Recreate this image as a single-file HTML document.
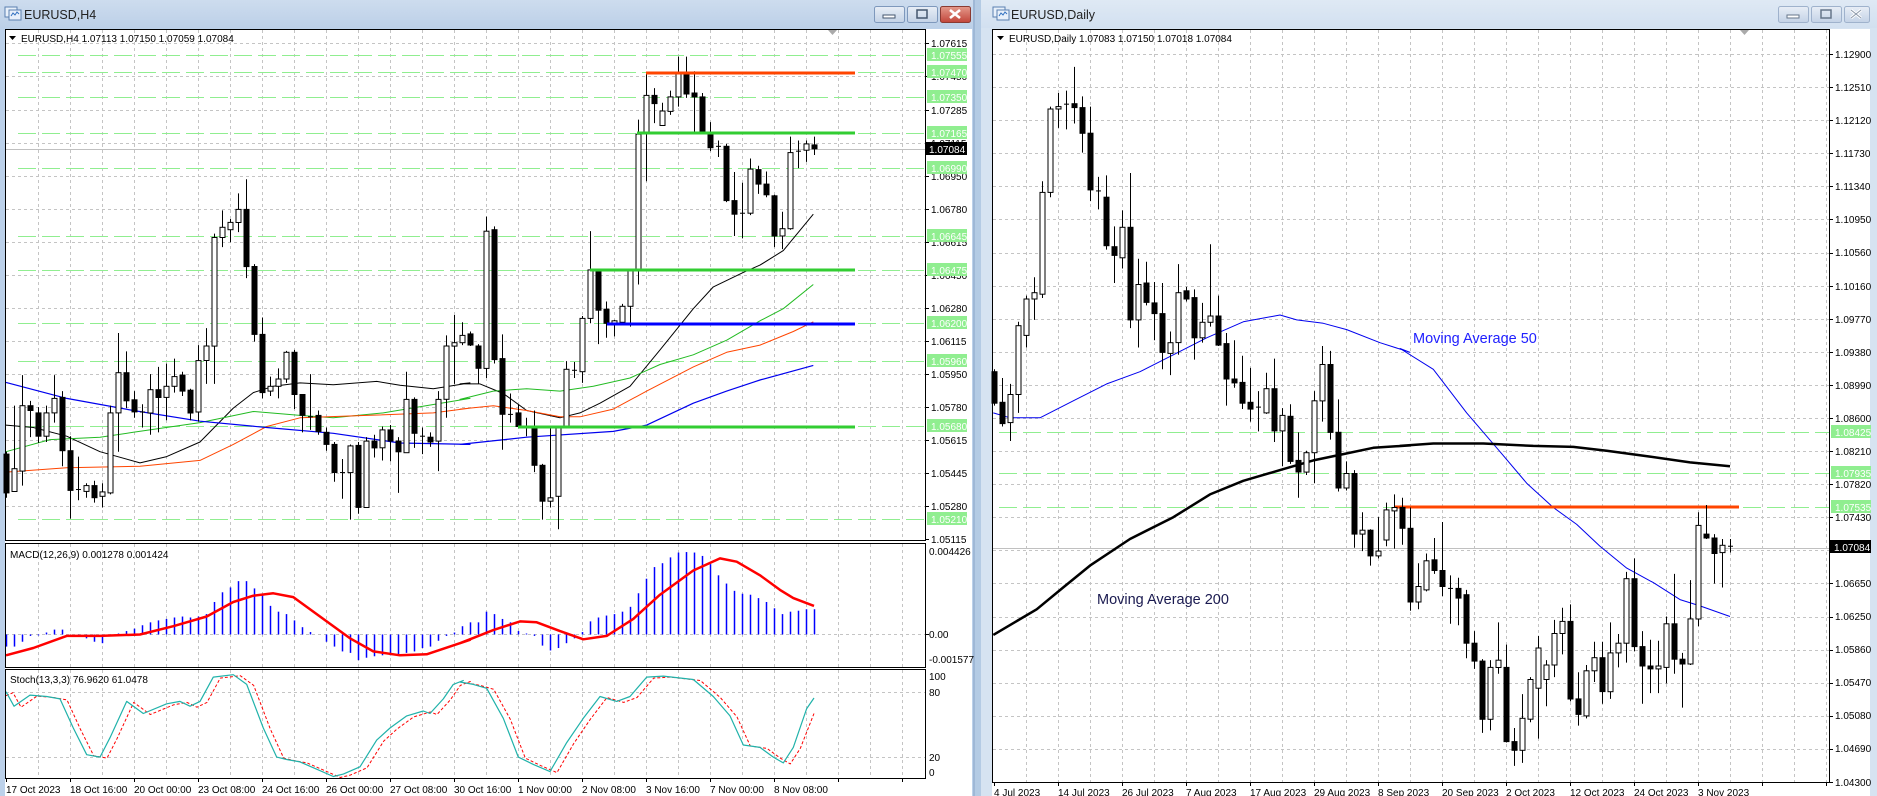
<!DOCTYPE html>
<html><head><meta charset="utf-8">
<style>
html,body{margin:0;padding:0;background:#fff;width:1877px;height:796px;overflow:hidden}
svg{display:block;font-family:"Liberation Sans",sans-serif}
.ax{font-size:10px;fill:#000}
.hl{font-size:10px;fill:#fff}
.tt{font-size:12.5px;fill:#222}
</style></head><body>
<svg id="s" width="1877" height="796" viewBox="0 0 1877 796" xmlns="http://www.w3.org/2000/svg">
<defs>
<linearGradient id="tb" x1="0" y1="0" x2="0" y2="1"><stop offset="0" stop-color="#cddcee"/><stop offset="1" stop-color="#bcd0e8"/></linearGradient>
<linearGradient id="tb2" x1="0" y1="0" x2="0" y2="1"><stop offset="0" stop-color="#dfe9f4"/><stop offset="1" stop-color="#d2e0f0"/></linearGradient>
<linearGradient id="bt" x1="0" y1="0" x2="0" y2="1"><stop offset="0" stop-color="#e8eef6"/><stop offset="1" stop-color="#c3d2e6"/></linearGradient>
<linearGradient id="br" x1="0" y1="0" x2="0" y2="1"><stop offset="0" stop-color="#e49a8c"/><stop offset="1" stop-color="#c2453a"/></linearGradient>
</defs>
<!-- windows frames -->
<rect x="0" y="0" width="975" height="796" fill="#bcd1ea"/>
<rect x="0" y="0" width="975" height="28" fill="url(#tb)"/>
<rect x="975" y="0" width="6" height="796" fill="#b4cbe4"/>
<rect x="973" y="0" width="2" height="796" fill="#9fb8d6"/>
<rect x="981" y="0" width="896" height="796" fill="#d6e3f1"/>
<rect x="981" y="0" width="896" height="28" fill="url(#tb2)"/>
<rect x="5" y="29" width="967" height="767" fill="#fff"/>
<rect x="992" y="29" width="878" height="767" fill="#fff"/>
<!-- title icons -->
<g stroke="#5a7fb0" fill="#e8f0fa" stroke-width="1">
<rect x="5" y="7" width="12" height="10"/><rect x="9" y="10" width="12" height="10"/>
<rect x="993" y="7" width="12" height="10"/><rect x="997" y="10" width="12" height="10"/>
</g>
<path d="M11 16 l2-3 2 2 2-3 2 2" stroke="#3070c0" fill="none"/>
<path d="M999 16 l2-3 2 2 2-3 2 2" stroke="#3070c0" fill="none"/>
<text x="24" y="19" class="tt">EURUSD,H4</text>
<text x="1011" y="19" class="tt">EURUSD,Daily</text>
<!-- buttons left -->
<rect x="874.5" y="6.5" width="30" height="16" rx="2" fill="url(#bt)" stroke="#7e98bc"/>
<rect x="883" y="15" width="12" height="3" fill="#fff" stroke="#44566e" stroke-width="1"/>
<rect x="907.5" y="6.5" width="30" height="16" rx="2" fill="url(#bt)" stroke="#7e98bc"/>
<rect x="917" y="10" width="10" height="8" fill="none" stroke="#44566e" stroke-width="1.5"/>
<rect x="940.5" y="6.5" width="30" height="16" rx="2" fill="url(#br)" stroke="#8a3a32"/>
<path d="M950 10 l10 8 M960 10 l-10 8" stroke="#fff" stroke-width="2.6"/>
<!-- buttons right -->
<rect x="1778.5" y="6.5" width="30" height="16" rx="2" fill="url(#bt)" stroke="#9fb2cc"/>
<rect x="1787" y="15" width="12" height="3" fill="#fff" stroke="#66768a"/>
<rect x="1811.5" y="6.5" width="30" height="16" rx="2" fill="url(#bt)" stroke="#9fb2cc"/>
<rect x="1821" y="10" width="10" height="8" fill="none" stroke="#66768a" stroke-width="1.5"/>
<rect x="1844.5" y="6.5" width="25" height="16" rx="2" fill="url(#bt)" stroke="#9fb2cc"/>
<path d="M1851 10 l10 8 M1861 10 l-10 8" stroke="#fff" stroke-width="3"/>
<path d="M1851 10 l10 8 M1861 10 l-10 8" stroke="#8a97a8" stroke-width="1"/>
<g id="g"></g>
<!-- panel borders -->
<g fill="none" stroke="#000" stroke-width="1">
<rect x="5.5" y="29.5" width="920" height="511"/>
<rect x="5.5" y="543.5" width="920" height="124"/>
<rect x="5.5" y="669.5" width="920" height="109"/>
<rect x="992.5" y="29.5" width="837" height="753"/>
</g>
<path d="M828 30 h9 l-4.5 5z M1740 30 h9 l-4.5 5z" fill="#aaa"/>
<!-- header texts -->
<path d="M9 36 h7 l-3.5 4z M997 36 h7 l-3.5 4z" fill="#000"/>
<text x="21" y="42" class="ax">EURUSD,H4  1.07113 1.07150 1.07059 1.07084</text>
<text x="1009" y="42" class="ax">EURUSD,Daily  1.07083 1.07150 1.07018 1.07084</text>
<text x="10" y="558" class="ax">MACD(12,26,9) 0.001278 0.001424</text>
<text x="10" y="683" class="ax">Stoch(13,3,3) 76.9620 61.0478</text>
<text x="1097" y="604" font-size="14.5" fill="#1a1a50">Moving Average 200</text>
<text x="1413" y="343" font-size="14.5" fill="#2020ff">Moving Average 50</text>
<!-- left axis -->
<g class="ax">
<text x="931" y="47">1.07615</text><text x="931" y="80">1.07450</text><text x="931" y="114">1.07285</text><text x="931" y="147">1.07115</text><text x="931" y="180">1.06950</text><text x="931" y="213">1.06780</text><text x="931" y="246">1.06615</text><text x="931" y="279">1.06450</text><text x="931" y="312">1.06280</text><text x="931" y="345">1.06115</text><text x="931" y="378">1.05950</text><text x="931" y="411">1.05780</text><text x="931" y="444">1.05615</text><text x="931" y="477">1.05445</text><text x="931" y="510">1.05280</text><text x="931" y="543">1.05115</text>
<text x="929" y="555">0.004426</text><text x="929" y="638">0.00</text><text x="929" y="663">-0.001577</text>
<text x="929" y="680">100</text><text x="929" y="696">80</text><text x="929" y="761">20</text><text x="929" y="776">0</text>
</g>
<g fill="#90ee90">
<rect x="927" y="48" width="40" height="13"/><rect x="927" y="65" width="40" height="13"/><rect x="927" y="90" width="40" height="13"/><rect x="927" y="126" width="40" height="13"/><rect x="927" y="161" width="40" height="13"/><rect x="927" y="229" width="40" height="13"/><rect x="927" y="263" width="40" height="13"/><rect x="927" y="316" width="40" height="13"/><rect x="927" y="354" width="40" height="13"/><rect x="927" y="419" width="40" height="13"/><rect x="927" y="512" width="40" height="13"/>
<rect x="1831" y="425" width="40" height="13"/><rect x="1831" y="466" width="40" height="13"/><rect x="1831" y="500" width="40" height="13"/>
</g>
<rect x="926" y="142" width="41" height="13" fill="#000"/>
<rect x="1830" y="540" width="41" height="13" fill="#000"/>
<g class="hl">
<text x="931" y="59">1.07555</text><text x="931" y="76">1.07470</text><text x="931" y="101">1.07350</text><text x="931" y="137">1.07165</text><text x="931" y="172">1.06990</text><text x="931" y="240">1.06645</text><text x="931" y="274">1.06475</text><text x="931" y="327">1.06200</text><text x="931" y="365">1.05960</text><text x="931" y="430">1.05680</text><text x="931" y="523">1.05210</text>
<text x="929" y="153">1.07084</text>
<text x="1835" y="436">1.08425</text><text x="1835" y="477">1.07935</text><text x="1835" y="511">1.07535</text>
<text x="1834" y="551">1.07084</text>
</g>
<!-- right axis -->
<g class="ax">
<text x="1835" y="58">1.12900</text><text x="1835" y="91">1.12510</text><text x="1835" y="124">1.12120</text><text x="1835" y="157">1.11730</text><text x="1835" y="190">1.11340</text><text x="1835" y="223">1.10950</text><text x="1835" y="256">1.10560</text><text x="1835" y="290">1.10160</text><text x="1835" y="323">1.09770</text><text x="1835" y="356">1.09380</text><text x="1835" y="389">1.08990</text><text x="1835" y="422">1.08600</text><text x="1835" y="455">1.08210</text><text x="1835" y="488">1.07820</text><text x="1835" y="521">1.07430</text><text x="1835" y="587">1.06650</text><text x="1835" y="620">1.06250</text><text x="1835" y="653">1.05860</text><text x="1835" y="686">1.05470</text><text x="1835" y="719">1.05080</text><text x="1835" y="752">1.04690</text><text x="1835" y="786">1.04300</text>
</g>
<!-- time axis -->
<g class="ax">
<text x="6" y="793">17 Oct 2023</text><text x="70" y="793">18 Oct 16:00</text><text x="134" y="793">20 Oct 00:00</text><text x="198" y="793">23 Oct 08:00</text><text x="262" y="793">24 Oct 16:00</text><text x="326" y="793">26 Oct 00:00</text><text x="390" y="793">27 Oct 08:00</text><text x="454" y="793">30 Oct 16:00</text><text x="518" y="793">1 Nov 00:00</text><text x="582" y="793">2 Nov 08:00</text><text x="646" y="793">3 Nov 16:00</text><text x="710" y="793">7 Nov 00:00</text><text x="774" y="793">8 Nov 08:00</text>
<text x="994" y="796">4 Jul 2023</text><text x="1058" y="796">14 Jul 2023</text><text x="1122" y="796">26 Jul 2023</text><text x="1186" y="796">7 Aug 2023</text><text x="1250" y="796">17 Aug 2023</text><text x="1314" y="796">29 Aug 2023</text><text x="1378" y="796">8 Sep 2023</text><text x="1442" y="796">20 Sep 2023</text><text x="1506" y="796">2 Oct 2023</text><text x="1570" y="796">12 Oct 2023</text><text x="1634" y="796">24 Oct 2023</text><text x="1698" y="796">3 Nov 2023</text>
</g>
</svg>
<script>
(function(){
var S=1/2.063;function Y(z){return 30+z*S;}
var o=[];
function ln(x1,y1,x2,y2,c,w,d){o.push('<line x1="'+x1+'" y1="'+y1+'" x2="'+x2+'" y2="'+y2+'" stroke="'+c+'" stroke-width="'+(w||1)+'"'+(d?' stroke-dasharray="'+d+'"':'')+'/>');}
function pl(pts,c,w,d){o.push('<polyline fill="none" points="'+pts.map(function(p){return p[0].toFixed(1)+','+p[1].toFixed(1)}).join(' ')+'" stroke="'+c+'" stroke-width="'+w+'"'+(d?' stroke-dasharray="'+d+'"':'')+' stroke-linejoin="round"/>');}
function cv(a,off){return a.map(function(p){return [off+p[0]/3,Y(p[1])]});}
var G='#c4c4c4',GD='3,3';
// left grids
var ly=[43,76,110,143,176,209,242,275,308,341,374,407,440,473,506];
ly.forEach(function(y){ln(6,y+.5,925,y+.5,G,1,GD);ln(925,y+.5,929,y+.5,'#000');});
ln(925,539.5,929,539.5,'#000');
for(var x=38;x<925;x+=32){ln(x+.5,30,x+.5,540,G,1,GD);ln(x+.5,544,x+.5,667,G,1,GD);ln(x+.5,670,x+.5,778,G,1,GD);}
for(var x=6;x<925;x+=64){ln(x+.5,778,x+.5,782,'#000');}
ln(6,634.5,925,634.5,G,1,GD);ln(925,634.5,929,634.5,'#000');
ln(6,692.5,925,692.5,G,1,GD);ln(6,757.5,925,757.5,G,1,GD);
// right grids
for(var n=0;n<23;n++){var y=Math.round(54+33.09*n)+.5;ln(993,y,1829,y,G,1,GD);ln(1829,y,1833,y,'#000');}
for(var x=1026;x<1829;x+=32){ln(x+.5,30,x+.5,782,G,1,GD);}
for(var x=994;x<1829;x+=64){ln(x+.5,782,x+.5,786,'#000');}
// green dashed levels
[55,72,97,133,168,236,270,323,361,426,519].forEach(function(y){ln(18,y+.5,925,y+.5,'#90ee90',1,'18,6');});
[432,473,507].forEach(function(y){ln(999,y+.5,1829,y+.5,'#90ee90',1,'18,6');});
ln(6,149.5,925,149.5,'#c0c0c0');ln(993,548.5,1829,548.5,'#c0c0c0');
// left MAs
pl(cv([[18,815],[100,820],[200,838],[300,870],[420,893],[500,880],[600,850],[700,780],[760,748],[820,735],[900,728],[1000,732],[1130,725],[1200,733],[1300,740],[1410,728]],0).concat(cv([[0,730],[60,730],[130,750],[200,785],[300,800],[360,790],[420,770],[510,735],[600,660],[700,575],[760,530],[850,500],[900,485],[970,455],[1060,380]],460)),'#000',1);
pl(cv([[18,870],[150,845],[300,840],[400,830],[600,810],[760,787],[900,795],[1000,800],[1150,790],[1410,760]],0).concat(cv([[0,762],[100,745],[200,740],[300,745],[400,735],[510,718],[600,690],[700,670],[800,640],[900,600],[970,575],[1060,525]],460)),'#22bb22',1);
pl(cv([[18,912],[200,903],[420,900],[600,888],[700,855],[800,818],[900,800],[1100,795],[1300,790],[1410,780]],0).concat(cv([[0,782],[100,775],[200,785],[300,798],[360,798],[460,782],[560,745],[700,695],[800,665],[900,650],[1000,622],[1060,602]],460)),'#ff4500',1);
pl(cv([[18,727],[200,760],[400,785],[600,807],[800,820],[1000,832],[1200,852],[1410,855]],0).concat(cv([[0,855],[200,840],[460,828],[560,815],[700,770],[800,745],[900,722],[1060,692]],460)),'#0000ee',1.2);
// left candles
var LC=[['b',875,955,870,965],['w',905,952,775,952],['w',775,910,712,940],['b',775,785,765,840],['b',790,838,778,852],['w',790,838,775,850],['w',760,790,712,810],['b',758,868,745,900],['b',868,950,838,1008],['d',948,948,880,970],['w',940,952,935,965],['b',940,965,930,975],['w',953,962,935,985],['w',790,955,775,958],['w',707,790,625,870],['b',707,765,663,780],['b',763,788,745,800],['d',788,788,772,820],['w',742,790,710,835],['b',742,758,695,830],['w',735,758,688,805],['w',715,735,678,748],['b',712,745,705,755],['b',743,790,740,805],['w',682,788,650,808],['w',652,682,615,730],['w',428,652,420,730],['w',407,428,372,448],['w',397,412,390,438],['w',370,397,337,417],['b',370,488,308,512],['b',488,628,483,643],['b',628,748,593,760],['w',735,745,715,755],['w',720,735,698,760],['w',665,720,662,728],['b',665,752,660,782],['b',752,795,752,830],['d',798,798,710,825],['b',795,828,785,835],['b',830,855,820,868],['b',855,913,850,932],['d',913,913,885,967],['w',858,913,855,1010],['b',857,985,850,998],['w',848,985,840,985],['b',848,862,835,882],['w',825,862,818,888],['b',825,848,815,890],['b',848,870,840,955],['w',762,872,705,872],['b',762,832,758,862],['d',838,838,820,875],['b',840,850,830,860],['w',762,848,745,910],['w',652,762,630,800],['w',645,652,588,730],['w',630,645,603,650],['b',627,650,622,652],['b',652,698,648,730],['w',415,698,385,718],['b',412,680,405,688],['b',678,793,628,866],['d',793,793,750,810],['b',790,818,772,820],['d',820,820,800,838],['b',820,898,785,912],['b',898,972,895,1010],['w',965,972,818,985],['w',820,962,820,1030],['w',700,820,683,822],['d',702,702,685,718],['w',595,705,590,728],['w',495,595,415,605],['b',497,578,495,648],['b',576,605,560,635],['w',600,605,598,632],['w',570,603,565,605],['w',497,570,497,612],['w',215,497,185,525],['w',135,213,90,312],['b',135,152,120,192],['w',167,197,150,198],['w',138,168,125,175],['w',90,138,55,158],['b',90,132,55,140],['b',130,138,85,210],['b',138,212,130,215],['b',213,243,190,250],['d',240,240,228,262],['b',240,352,235,355],['b',352,380,293,425],['d',378,378,315,430],['w',287,378,265,382],['b',288,318,280,338],['b',318,340,292,345],['b',342,425,340,448],['w',410,425,375,452],['w',253,410,220,412],['d',250,250,228,285],['w',235,248,228,272],['b',237,245,220,258]];
function candle(x,c){var t=Y(c[1]),b=Y(c[2]),h=Y(c[3]),l=Y(c[4]);x=Math.round(x)+.5;
ln(x,h,x,l,'#000',1);
if(c[0]=='d'){ln(x-2.5,t,x+2.5,t,'#000',1);return;}
var hh=Math.max(b-t,1.5);
if(c[0]=='b')o.push('<rect x="'+(x-2.5)+'" y="'+t.toFixed(1)+'" width="5" height="'+hh.toFixed(1)+'" fill="#000" stroke="#000" stroke-width="1"/>');
else o.push('<rect x="'+(x-2.5)+'" y="'+t.toFixed(1)+'" width="5" height="'+hh.toFixed(1)+'" fill="#fff" stroke="#000" stroke-width="1"/>');}
LC.forEach(function(c,k){candle(6+8*k,c);});
ln(646,73,855,73,'#ff4500',3);ln(637,133,855,133,'#32cd32',3);ln(590,270,855,270,'#32cd32',3);ln(607,324,855,324,'#0000ff',3);ln(518,427,855,427,'#32cd32',3);
// MACD hist
var H=[1272,1272,1262,1250,1249,1243,1237,1237,1247,1250,1255,1262,1265,1250,1245,1240,1235,1228,1222,1218,1215,1212,1210,1212,1210,1205,1180,1160,1150,1137,1137,1152,1165,1188,1200,1205,1218,1232,1242,1248,1262,1272,1282,1285,1300,1295,1292,1290,1290,1288,1285,1282,1275,1272,1260,1250,1243,1230,1222,1222,1200,1205,1215,1222,1240,1245,1250,1270,1280,1275,1265,1255,1242,1220,1212,1208,1205,1200,1190,1162,1132,1108,1100,1088,1078,1077,1078,1085,1102,1125,1142,1157,1163,1165,1172,1180,1193,1205,1200,1198,1195,1195];
var z0=Y(1247);H.forEach(function(v,k){var x=6+8*k+.5;if(Math.abs(Y(v)-z0)>0.5)ln(x,z0,x,Y(v),'#0000ff',1.5);});
pl(cv([[18,1290],[100,1275],[200,1250],[300,1250],[420,1247],[520,1230],[620,1210],[700,1180],[760,1167],[820,1162],[880,1170],[950,1205],[1050,1255],[1120,1282],[1200,1290],[1280,1288],[1410,1258]],0).concat(cv([[0,1265],[100,1238],[180,1220],[230,1222],[300,1240],[370,1257],[440,1250],[520,1215],[600,1165],[700,1115],[780,1090],[830,1097],[900,1125],[960,1155],[1000,1172],[1062,1188]],460)),'#ff0000',2.5);
// stoch
var st=cv([[18,1365],[42,1395],[90,1372],[140,1375],[180,1380],[220,1440],[260,1495],[300,1500],[330,1460],[380,1385],[430,1410],[500,1390],[540,1385],[570,1395],[600,1385],[640,1335],[700,1330],[740,1350],[790,1440],[830,1500],[860,1505],[900,1510],[950,1525],[1000,1540],[1030,1535],[1080,1520],[1130,1465],[1170,1440],[1220,1415],[1270,1405],[1290,1410],[1330,1380],[1360,1350],[1390,1342]],0).concat(cv([[0,1345],[40,1350],[80,1358],[130,1420],[175,1500],[220,1515],[270,1530],[320,1470],[370,1420],[420,1375],[470,1385],[510,1375],[560,1335],[610,1333],[700,1340],[760,1375],[810,1415],[850,1475],[900,1480],[940,1500],[970,1512],[1000,1480],[1040,1400],[1062,1378]],460));
var sr=st.map(function(p){return [p[0]+7,p[1]+1]}).filter(function(p){return p[0]<806;});sr.unshift([6,st[0][1]+4]);sr.push([814,Y(1410)]);
pl(sr,'#ff0000',1,'3,2');pl(st,'#20b2aa',1.2);
// right MAs
pl(cv([[10,790],[60,800],[150,800],[250,765],[350,730],[450,705],[550,670],[650,635],[760,602],[870,588],[920,598],[1000,605],[1070,618],[1170,645],[1260,665]],990).concat(cv([[0,657],[100,700],[200,790],[300,870],[380,935],[460,985],[530,1020],[600,1065],[680,1110],[760,1140],[840,1175],[900,1188],[990,1210]],1400)),'#0000ee',1);
pl(cv([[10,1248],[140,1195],[220,1150],[300,1105],[420,1050],[550,1005],[660,958],[760,930],[870,908],[970,888],[1060,875],[1150,862],[1260,857]],990).concat(cv([[0,858],[100,853],[250,853],[400,858],[520,860],[620,868],[750,880],[870,892],[990,900]],1400)),'#000',2.5);
ln(1394,507,1739,507,'#ff4500',3);
var RC=[['b',705,770,700,775],['b',768,812,718,818],['w',752,810,730,848],['w',610,752,602,790],['w',555,630,548,655],['w',542,555,510,598],['w',335,545,312,553],['w',163,335,158,345],['w',158,163,130,202],['d',153,153,125,205],['b',152,160,76,193],['b',160,213,137,253],['b',213,330,158,353],['d',332,332,303,370],['b',345,445,300,453],['b',447,465,405,522],['w',407,470,372,492],['b',407,598,295,615],['w',525,598,472,655],['b',522,562,478,568],['b',563,585,520,640],['b',585,665,522,700],['w',645,667,622,712],['w',542,645,483,670],['b',538,555,530,560],['b',552,635,535,680],['w',603,635,563,645],['w',590,603,442,612],['b',590,650,548,652],['b',647,720,625,775],['b',720,728,640,738],['b',727,770,672,782],['b',768,782,697,808],['d',778,778,745,828],['w',740,790,707,792],['b',740,827,678,850],['w',795,827,780,900],['b',797,890,772,895],['b',888,912,830,965],['w',872,912,868,918],['w',765,872,745,935],['w',690,765,652,808],['b',690,830,662,845],['b',830,945,762,952],['w',915,945,890,950],['b',915,1040,908,1068],['w',1032,1040,995,1075],['b',1032,1085,1030,1105],['w',1075,1085,1005,1090],['w',990,1052,975,1065],['w',985,992,958,1070],['b',985,1028,965,1062],['b',1028,1180,985,1198],['w',1148,1180,1100,1195],['w',1095,1155,1080,1158],['b',1093,1115,1048,1122],['b',1115,1148,1015,1168],['d',1152,1152,1125,1225],['b',1152,1172,1130,1228],['b',1165,1265,1155,1296],['b',1265,1302,1240,1318],['b',1302,1422,1298,1450],['w',1315,1422,1300,1445],['w',1300,1315,1222,1328],['b',1315,1468,1268,1470],['b',1468,1486,1440,1518],['w',1420,1486,1370,1512],['w',1340,1422,1335,1428],['w',1275,1358,1250,1462],['w',1310,1340,1300,1395],['w',1245,1310,1217,1335],['w',1220,1245,1192,1288],['b',1220,1380,1185,1385],['b',1380,1412,1325,1435],['w',1322,1415,1310,1420],['w',1295,1322,1262,1345],['b',1295,1365,1262,1390],['w',1285,1365,1222,1380],['w',1265,1285,1246,1315],['w',1132,1265,1118,1305],['b',1132,1272,1090,1282],['b',1272,1312,1240,1390],['b',1312,1318,1258,1368],['w',1312,1318,1260,1368],['w',1225,1315,1210,1348],['b',1225,1298,1122,1328],['b',1298,1308,1285,1398],['w',1215,1308,1135,1310],['w',1022,1215,995,1230],['b',1040,1048,980,1050],['b',1048,1080,1040,1142],['w',1063,1078,1050,1150],['d',1065,1065,1050,1078]];
RC.forEach(function(c,j){candle(994+8*j,c);});
document.getElementById('g').innerHTML=o.join('');
})();
</script>
</body></html>
